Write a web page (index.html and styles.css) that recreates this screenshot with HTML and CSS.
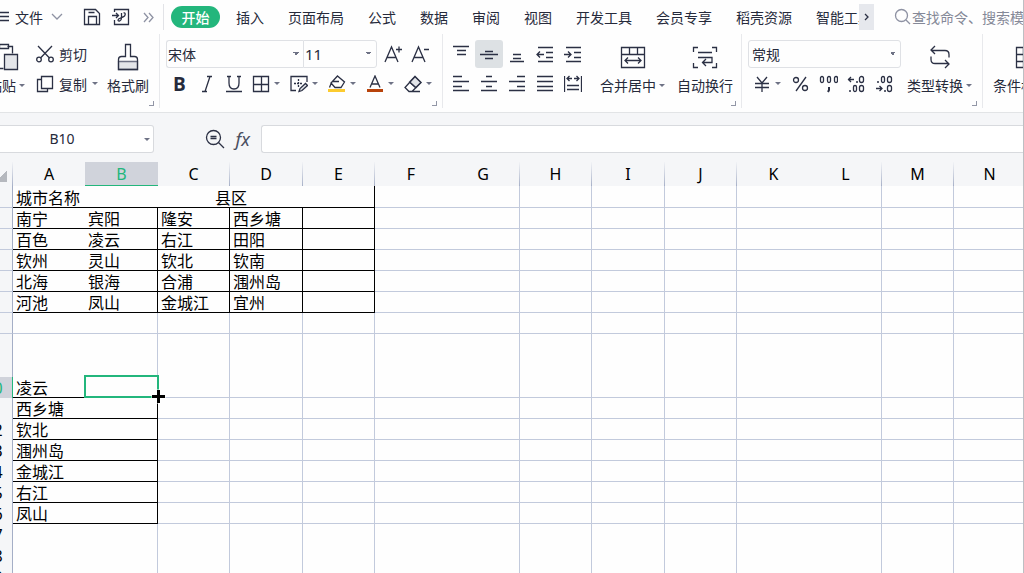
FILE: index.html
```
<!DOCTYPE html>
<html lang="zh-CN">
<head>
<meta charset="utf-8">
<title>WPS 表格</title>
<link rel="stylesheet" href="styles.css">
</head>
<body>
<div class="app">
<header class="menubar">
  <button class="file"><svg width="9" height="12" viewBox="0 0 9 12"><path d="M0 1.500h9M0 5.500h9M0 9.500h9"/></svg><span>文件</span><svg class="soft" width="12" height="8" viewBox="0 0 12 8"><path d="M1 1l5 5 5-5"/></svg></button>
  <button class="quick" aria-label="保存"><svg width="18" height="18" viewBox="0 0 18 18"><path d="M1.500 1.500h11l4 4v11h-15zM5.500 16.500V8.500h8v8M5.500 4.500h6"/></svg></button>
  <button class="quick" aria-label="输出为PDF"><svg width="18" height="18" viewBox="0 0 18 18"><path d="M2.500 4V1.500h14v15h-14V12M0 7.500h6M4 5l2.500 2.500L4 10M9.500 5v5c0 3-3.500 4-3.500 2s4.500-2 6.500-4c1.500-2 .5-3.500-1-3"/></svg></button>
  <button class="quick more" aria-label="更多"><svg class="soft" width="11" height="11" viewBox="0 0 11 11"><path d="M1 1l4 4.500L1 10M6 1l4 4.500L6 10"/></svg></button>
  <nav class="tabs">
    <button class="tab active">开始</button><button class="tab">插入</button><button class="tab">页面布局</button><button class="tab">公式</button><button class="tab">数据</button><button class="tab">审阅</button><button class="tab">视图</button><button class="tab">开发工具</button><button class="tab">会员专享</button><button class="tab">稻壳资源</button><button class="tab">智能工具箱</button>
  </nav>
  <button class="scroll" aria-label="向右滚动"><svg width="5" height="8" viewBox="0 0 5 8"><path d="M1 1l3 3-3 3"/></svg></button>
  <label class="search"><svg class="soft" width="18" height="18" viewBox="0 0 18 18"><circle cx="7.500" cy="7.500" r="6"/><path d="M12 12l4 4"/></svg><input type="text" placeholder="查找命令、搜索模板" aria-label="查找命令"></label>
</header>

<section class="ribbon">
  <div class="group clipboard">
    <button class="big paste"><svg width="26" height="28" viewBox="0 0 26 28"><path d="M6.500 3.500h-4v22h8M14.500 3.500h5v7"/><path d="M6.500 1.500h9v4h-9z"/><path class="tint dark" d="M11.500 11.500h13v15h-13z"/></svg><span class="cap">粘贴<i class="caret"></i></span></button>
    <div class="stack">
      <button class="line"><svg width="18" height="18" viewBox="0 0 18 18"><path d="M2 1l11.500 12M16 1L4.500 13"/><circle cx="3" cy="14.500" r="2.300"/><circle cx="15" cy="14.500" r="2.300"/></svg>剪切</button>
      <button class="line"><svg width="18" height="18" viewBox="0 0 18 18"><path d="M5.500 1.500h11v12h-11zM5.500 4.500h-4v12h10v-3"/></svg>复制<i class="caret"></i></button>
    </div>
    <button class="big"><svg width="22" height="28" viewBox="0 0 22 28"><path class="tint" d="M1.500 18.500h19v8h-19z"/><path d="M1.500 26.500v-10q0-3 3-3h4v-12h5v12h4q3 0 3 3v10z"/></svg><span class="cap">格式刷</span></button>
    <i class="launch"></i>
  </div>

  <div class="group font">
    <div class="stack">
      <div class="row">
        <select class="pick name" aria-label="字体"><option>宋体</option></select><select class="pick size" aria-label="字号"><option>11</option></select>
        <button class="tool first" aria-label="增大字号"><svg width="20" height="20" viewBox="0 0 20 20"><path d="M2 18L8.500 3 15 18M4 13.500h9M13 5.500h6M16 2.500v6"/></svg></button><button class="tool" aria-label="减小字号"><svg width="20" height="20" viewBox="0 0 20 20"><path d="M2 18L8.500 3 15 18M4 13.500h9M14 5.500h5"/></svg></button>
      </div>
      <div class="row">
        <button class="tool bold">B</button><button class="tool" aria-label="倾斜"><svg width="18" height="18" viewBox="0 0 18 18"><path d="M9 1.500h5M4 16.500h5M12 1.500l-5 15"/></svg></button><button class="tool" aria-label="下划线"><svg width="18" height="18" viewBox="0 0 18 18"><path d="M2 1.500h4M12 1.500h4M4 1.500V8q0 6 5 6t5-6V1.500M1 16.500h16"/></svg></button>
        <button class="drop" aria-label="边框"><svg width="18" height="18" viewBox="0 0 18 18"><path d="M1.500 1.500h15v15h-15zM9.500 1.500v15M1.500 9.500h15"/></svg><i class="caret"></i></button>
        <button class="drop" aria-label="绘图边框"><svg width="18" height="18" viewBox="0 0 18 18"><path d="M6 15.500H1v-14h16V7"/><path class="dash" d="M4 8.500h8M8.500 4v9"/><path class="tint dark" d="M9 16.500l1-3 5.500-5 2 2-5.500 5z"/></svg><i class="caret"></i></button>
        <button class="drop" aria-label="填充颜色"><svg width="18" height="18" viewBox="0 0 18 18"><path d="M9.500 1l7 6-3.500 5.500H7L3 8zM3.500 7.500L1.500 12.500M4 6.500h7"/><path class="yellow" d="M0 14h17v3H0z"/></svg><i class="caret"></i></button>
        <button class="drop" aria-label="字体颜色"><svg width="18" height="18" viewBox="0 0 18 18"><path d="M4 12.500L9 1l5 11.500M5.500 9h7"/><path class="rust" d="M1 14h16v3H1z"/></svg><i class="caret"></i></button>
        <button class="drop" aria-label="清除"><svg width="18" height="18" viewBox="0 0 18 18"><path class="tint" d="M11 1.500l6 6-5 5-6.500-5.500z"/><path d="M11 1.500l6 6-9 9H5l-4-4zM5.500 7l6.500 6M8 16.500h8"/></svg><i class="caret"></i></button>
      </div>
    </div>
    <i class="launch"></i>
  </div>

  <div class="group align">
    <div class="stack">
      <div class="row">
        <button class="tool" aria-label="顶端对齐"><svg width="18" height="18" viewBox="0 0 18 18"><path d="M1 1.500h16M5 5.500h9M5 9.500h9"/></svg></button><button class="tool on" aria-label="垂直居中"><svg width="18" height="18" viewBox="0 0 18 18"><path d="M5 6.500h8M0 9.500h18M5 13.500h8"/></svg></button><button class="tool" aria-label="底端对齐"><svg width="18" height="18" viewBox="0 0 18 18"><path d="M5 9.500h8M5 13.500h8M2 16.500h14"/></svg></button><button class="tool" aria-label="减少缩进"><svg width="18" height="18" viewBox="0 0 18 18"><path d="M2 2.500h15M10 7.500h7M10 12.500h7M2 16.500h15M1 9.500h7M4 6.500l-3 3 3 3"/></svg></button><button class="tool" aria-label="增加缩进"><svg width="18" height="18" viewBox="0 0 18 18"><path d="M2 2.500h15M10 7.500h7M10 12.500h7M2 16.500h15M0 9.500h7M4 6.500l3 3-3 3"/></svg></button>
      </div>
      <div class="row">
        <button class="tool" aria-label="左对齐"><svg width="18" height="18" viewBox="0 0 18 18"><path d="M1 1.500h9M1 6.500h16M1 11.500h9M1 15.500h16"/></svg></button><button class="tool" aria-label="水平居中"><svg width="18" height="18" viewBox="0 0 18 18"><path d="M6 1.500h6M1 6.500h16M6 11.500h6M1 15.500h16"/></svg></button><button class="tool" aria-label="右对齐"><svg width="18" height="18" viewBox="0 0 18 18"><path d="M9 1.500h8M1 6.500h16M9 11.500h8M1 15.500h16"/></svg></button><button class="tool" aria-label="两端对齐"><svg width="18" height="18" viewBox="0 0 18 18"><path d="M1 1.500h16M1 6.500h16M1 11.500h16M1 15.500h16"/></svg></button><button class="tool" aria-label="分散对齐"><svg width="18" height="18" viewBox="0 0 18 18"><path d="M.5 1v16M17.500 1v16M3 3.500h5M10 3.500h5M5.500 1L3 3.500 5.500 6M12.500 1L15 3.500 12.500 6M3 10.500h12M3 14.500h12"/></svg></button>
      </div>
    </div>
    <button class="big merge"><svg width="26" height="24" viewBox="0 0 26 24"><path d="M1.500 2.500h23v20h-23zM1.500 9.500h23M9.500 2.500v7M17.500 2.500v7M5 15.500h16M8 12.500l-3 3 3 3M18 12.500l3 3-3 3"/></svg><span class="cap">合并居中<i class="caret"></i></span></button>
    <button class="big wrap"><svg width="26" height="24" viewBox="0 0 26 24"><path d="M6 2.500H1.500V7M20 2.500h4.500V7M6 22.500H1.500V18M20 22.500h4.500V18M6 7.500h14M6 12.500h14v5h-9M14 14l-3.500 3.500L14 21"/></svg><span class="cap">自动换行</span></button>
    <i class="launch"></i>
  </div>

  <div class="group number">
    <div class="stack">
      <div class="row"><select class="pick format" aria-label="数字格式"><option>常规</option></select></div>
      <div class="row">
        <button class="drop" aria-label="货币"><svg width="18" height="18" viewBox="0 0 18 18"><path d="M4 2l5 6 5-6M2 8.500h14M2 12.500h14M9 8v9"/></svg><i class="caret"></i></button><button class="tool" aria-label="百分比"><svg width="18" height="18" viewBox="0 0 18 18"><circle cx="5" cy="5" r="2.500"/><circle cx="14" cy="13" r="2.500"/><path d="M15 2L5 16"/></svg></button><button class="tool" aria-label="千位分隔"><svg width="20" height="18" viewBox="0 0 20 18"><rect x="2.500" y="1.500" width="3" height="6" rx="1.500"/><rect x="9.500" y="1.500" width="3" height="6" rx="1.500"/><rect x="16.500" y="1.500" width="3" height="6" rx="1.500"/><path class="thick" d="M11 12v3l-1 2"/></svg></button><button class="tool" aria-label="增加小数位"><svg width="20" height="18" viewBox="0 0 20 18"><path d="M2 4.500h6M5 2L2.500 4.500 5 7M10 7h2M3 16h2"/><rect x="13.500" y="1.500" width="4" height="6" rx="2"/><rect x="7.500" y="10.500" width="3" height="6" rx="1.500"/><rect x="13.500" y="10.500" width="4" height="6" rx="2"/></svg></button><button class="tool" aria-label="减少小数位"><svg width="20" height="18" viewBox="0 0 20 18"><path d="M2 13.500h6M5.500 11L8 13.500 5.500 16M3 7h2M10 16h2"/><rect x="7.500" y="1.500" width="3" height="6" rx="1.500"/><rect x="13.500" y="1.500" width="4" height="6" rx="2"/><rect x="13.500" y="10.500" width="4" height="6" rx="2"/></svg></button>
      </div>
    </div>
    <button class="big convert"><svg width="22" height="24" viewBox="0 0 22 24"><path d="M6 1L2 5l4 4M2 5.500h14q4 0 4 4v3M16 15l4 4-4 4M20 18.500H6q-4 0-4-4v-3"/></svg><span class="cap">类型转换<i class="caret"></i></span></button>
    <i class="launch"></i>
  </div>

  <div class="group styles">
    <button class="big"><svg width="22" height="24" viewBox="0 0 22 24"><path class="tint" d="M8.500 2.500h12v7h-12z"/><path d="M1.500 2.500h19v20h-19zM1.500 9.500h19M1.500 16.500h19M8.500 2.500v20"/></svg><span class="cap">条件格式<i class="caret"></i></span></button>
  </div>
</section>

<section class="formula">
  <div class="namebox"><input type="text" value="B10" aria-label="名称框"><button aria-label="名称列表"><i class="caret"></i></button></div>
  <div class="fx">
    <button aria-label="查找"><svg width="20" height="20" viewBox="0 0 20 20"><circle cx="8.500" cy="8.500" r="7"/><path d="M13.500 13.500l5.500 5.500M5.500 7.500h6M5.500 9.500h6"/></svg></button>
    <button class="fn">fx</button>
  </div>
  <input class="content" type="text" aria-label="编辑栏">
</section>

<main class="sheet">
<table>
<colgroup><col class="head"><col class="n"><col class="w"><col class="n"><col class="w"><col class="n"><col class="n"><col class="w"><col class="n"><col class="w"><col class="n"><col class="w"><col class="n"><col class="n"><col class="n"></colgroup>
<thead><tr><th class="corner"></th><th class="open">A</th><th class="picked">B</th><th>C</th><th>D</th><th>E</th><th class="open">F</th><th>G</th><th>H</th><th>I</th><th>J</th><th class="open">K</th><th>L</th><th>M</th><th>N</th></tr></thead>
<tbody class="upper">
<tr><th>1</th><td class="k a">城市名称</td><td class="k r c" colspan="4">县区</td><td class="a"><td><td><td><td><td class="a"><td><td><td></tr>
<tr><th>2</th><td class="k a">南宁</td><td class="k r">宾阳</td><td class="k r">隆安</td><td class="k r">西乡塘</td><td class="k r"></td><td class="a"><td><td><td><td><td class="a"><td><td><td></tr>
<tr><th>3</th><td class="k a">百色</td><td class="k r">凌云</td><td class="k r">右江</td><td class="k r">田阳</td><td class="k r"></td><td class="a"><td><td><td><td><td class="a"><td><td><td></tr>
<tr><th>4</th><td class="k a">钦州</td><td class="k r">灵山</td><td class="k r">钦北</td><td class="k r">钦南</td><td class="k r"></td><td class="a"><td><td><td><td><td class="a"><td><td><td></tr>
<tr><th>5</th><td class="k a">北海</td><td class="k r">银海</td><td class="k r">合浦</td><td class="k r">涠州岛</td><td class="k r"></td><td class="a"><td><td><td><td><td class="a"><td><td><td></tr>
<tr><th>6</th><td class="k a">河池</td><td class="k r">凤山</td><td class="k r">金城江</td><td class="k r">宜州</td><td class="k r"></td><td class="a"><td><td><td><td><td class="a"><td><td><td></tr>
<tr><th>7</th><td class="a"><td><td><td><td><td class="a"><td><td><td><td><td class="a"><td><td><td></tr>
</tbody>
<tbody>
<tr class="bare"><th>8</th><td class="a"><td><td><td><td><td class="a"><td><td><td><td><td class="a"><td><td><td></tr>
<tr class="bare"><th>9</th><td class="a"><td><td><td><td><td class="a"><td><td><td><td><td class="a"><td><td><td></tr>
<tr><th class="now">10</th><td class="k a">凌云</td><td class="k r cell"><div class="cursor"><svg width="14" height="14" viewBox="0 0 14 14"><path d="M5 0h3v5h5v3H8v5H5V8H0V5h5z"/></svg></div></td><td><td><td><td class="a"><td><td><td><td><td class="a"><td><td><td></tr>
<tr><th>11</th><td class="k a">西乡塘</td><td class="k r"></td><td><td><td><td class="a"><td><td><td><td><td class="a"><td><td><td></tr>
<tr><th>12</th><td class="k a">钦北</td><td class="k r"></td><td><td><td><td class="a"><td><td><td><td><td class="a"><td><td><td></tr>
<tr><th>13</th><td class="k a">涠州岛</td><td class="k r"></td><td><td><td><td class="a"><td><td><td><td><td class="a"><td><td><td></tr>
<tr><th>14</th><td class="k a">金城江</td><td class="k r"></td><td><td><td><td class="a"><td><td><td><td><td class="a"><td><td><td></tr>
<tr><th>15</th><td class="k a">右江</td><td class="k r"></td><td><td><td><td class="a"><td><td><td><td><td class="a"><td><td><td></tr>
<tr><th>16</th><td class="k a">凤山</td><td class="k r"></td><td><td><td><td class="a"><td><td><td><td><td class="a"><td><td><td></tr>
<tr class="bare blank"><th>17</th><td class="a"><td><td><td><td><td class="a"><td><td><td><td><td class="a"><td><td><td></tr>
<tr class="bare blank"><th>18</th><td class="a"><td><td><td><td><td class="a"><td><td><td><td><td class="a"><td><td><td></tr>
<tr class="bare blank"><th>19</th><td class="a"><td><td><td><td><td class="a"><td><td><td><td><td class="a"><td><td><td></tr>
</tbody>
</table>
</main>
</div>
</body>
</html>
```

FILE: styles.css
```
* { box-sizing: border-box; }
html, body { margin: 0; height: 100%; overflow: hidden; }
body { font: 14px/20px "Noto Sans CJK SC", sans-serif; color: #262a3b; background: #fefefe; }
button, input, select { font: inherit; color: inherit; border: 0; padding: 0; margin: 0; background: none; outline: 0; }
button { display: flex; align-items: center; justify-content: center; flex: none; white-space: nowrap; }
svg { display: block; flex: none; fill: none; stroke: #2b3044; stroke-width: 1.3; }
svg .tint { fill: #e3e5e9; stroke: #6e7285; }
svg .dark { stroke: #2b3044; }
svg .dash { stroke-dasharray: 2 1; }
svg .yellow { fill: #fccb2f; stroke: none; }
svg .rust { fill: #b8430b; stroke: none; }
svg .thick { stroke-width: 2; }
svg.soft { stroke: #8e92a3; }

.app { height: 100vh; display: flex; flex-direction: column; overflow: hidden; border-right: 1px solid #bdbfc3; }

.menubar { display: flex; align-items: center; height: 34px; flex: none; }
.file { gap: 8px; width: 62px; justify-content: flex-start; }
.file span { margin-left: -2px; }
.quick { width: 29px; }
.quick:nth-of-type(2) { margin-left: 15px; }
.quick.more { width: 27px; }
.tabs { display: flex; align-items: center; flex: 0 1 696px; min-width: 0; overflow: hidden; padding-left: 7px; margin-left: 1px; border-left: 1px solid #e2e3e7; gap: 24px; height: 26px; }
.tab.active { background: #23b67c; color: #fff; font-weight: 500; width: 49px; height: 22px; border-radius: 11px; margin-right: -8px; }
.scroll { width: 15px; height: 26px; background: #e6e8ed; }
.search { display: flex; align-items: center; flex: 1 0 0; min-width: 0; margin-left: 20px; overflow: hidden; }
.search input { width: 130px; flex: none; }
.search input::placeholder { color: #858998; opacity: 1; }

.ribbon { display: flex; height: 79px; flex: none; overflow: hidden; padding-bottom: 4px; border-bottom: 1px solid #e2e4e6; }
.group { position: relative; display: flex; flex: none; padding-top: 5px; border-right: 1px solid #e8e9ec; }
.launch { position: absolute; right: 5px; bottom: 2px; width: 5px; height: 5px; border: solid #9296a6; border-width: 0 1px 1px 0; }
.caret { flex: none; width: 0; height: 0; border: 3px solid transparent; border-top-color: #6e7285; border-bottom: 0; }
.stack { display: flex; flex-direction: column; gap: 1px; }
.row { display: flex; height: 29px; align-items: center; }
.big { flex-direction: column; justify-content: flex-end; height: 56px; gap: 6px; }
.clipboard .big { gap: 4px; }
.cap { display: flex; align-items: center; gap: 3px; }
.tool { width: 28px; height: 28px; }
.font .tool { width: 27px; }
.tool.on { background: #dde1e4; border-radius: 3px; }
.tool.bold { font: 700 19px/20px "Open Sans", sans-serif; }
.drop { width: 38px; height: 28px; gap: 4px; }
.clipboard { margin-left: -12px; width: 172px; }
.paste svg { margin-right: 2px; }
.clipboard .stack { margin: 0 9px 0 11px; }
.line { height: 29px; gap: 5px; justify-content: flex-start; }
.font { width: 283px; padding-left: 6px; }
.tool.first { margin-left: 2px; }
.pick { appearance: none; height: 28px; border: 1px solid #dfe1e5; padding: 0 3px; background: conic-gradient(from -45deg at 50% 100%, #6e7285 90deg, transparent 0) no-repeat right 4px center / 6px 3px; }
.name { width: 137px; padding-left: 1px; border-right: 0; border-radius: 3px 0 0 3px; }
.size { width: 74px; border-radius: 0 3px 3px 0; font-size: 15px; padding-left: 1px; }
.format { width: 153px; border-radius: 3px; }
.name, .size, .format { background-image: linear-gradient(to bottom right, #6e7285 50%, transparent 50%), linear-gradient(to bottom left, #6e7285 50%, transparent 50%); background-size: 3px 3px; background-position: right 4px center, right 7px center; }
.align { width: 299px; padding-left: 4px; }
.merge { margin-left: 13px; }
.wrap { margin-left: 12px; }
.number { width: 241px; padding-left: 6px; }
.convert { margin-left: 6px; }
.styles { padding-left: 10px; }

.formula { display: flex; align-items: center; height: 49px; flex: none; padding-top: 3px; background: #f5f6f8; }
.namebox { display: flex; width: 154px; height: 28px; background: #fff; border: 1px solid #d8dade; border-left: 0; border-radius: 0 3px 3px 0; }
.namebox input { flex: 1; min-width: 0; text-align: center; padding-right: 16px; }
.namebox input, .size { font-family: "Noto Sans", sans-serif; }
.namebox button { width: 13px; }
.fx { display: flex; width: 107px; justify-content: flex-end; gap: 11px; padding-right: 11px; }
.fn { font: italic 18px/20px "Noto Sans", sans-serif; color: #4a4e60; }
.content { flex: 1; min-width: 0; height: 28px; background: #fff; border: 1px solid #d8dade; border-right: 0; border-radius: 3px 0 0 3px; }

.sheet { flex: 1; min-height: 0; overflow: hidden; margin-left: -25px; }
table { width: 100%; table-layout: fixed; border-collapse: separate; border-spacing: 0; }
col.head { width: 38px; }
col.n { width: 72px; }
col.w { width: 73px; }
th, td { height: 21px; padding: 0; overflow: hidden; white-space: nowrap; line-height: 18px; font-size: 16px; font-weight: 400; color: #000; }
th { font-family: "Noto Sans", sans-serif; background: #f5f6f8; }
thead th { height: 24px; border-right: 1px solid; border-image: linear-gradient(#f5f6f8, #a4aec6) 1; }
thead th.open { border-right: 0; border-image: none; }
thead th.picked { background: #d0d3db; color: #23b67c; border-image: none; border: 0; border-bottom: 1px solid #23b67c; }
thead th.corner { background: linear-gradient(135deg, transparent 50%, #b5b8be 50%) no-repeat 20px 8px / 12px 12px #f5f6f8; }
tbody th { border-right: 1px solid #a4aec6; }
.upper th { border-bottom: 1px solid #c2cadc; }
tbody th.now { background: #d0d3db; color: #23b67c; border-right-color: #23b67c; }
td { padding-left: 3px; border-right: 1px solid #c2cadc; border-bottom: 1px solid #c2cadc; }
td.a { border-right: 0; }
td.k { border-bottom-color: #000; }
td.r { border-right-color: #000; }
td.c { text-align: center; }
.upper tr:first-child > * { height: 22px; }
.bare td, .bare th { border-bottom: 0; }
.bare + .bare > * { height: 22px; }
.blank + .blank > * { height: 21px; }
td.cell { position: relative; overflow: visible; }
.cursor { position: absolute; inset: -2px -2px -1px -1px; border: 2px solid #23b67c; }
.cursor svg { position: absolute; right: -9px; bottom: -8px; fill: #000; stroke: #fff; stroke-width: 1; paint-order: stroke; overflow: visible; }
```
